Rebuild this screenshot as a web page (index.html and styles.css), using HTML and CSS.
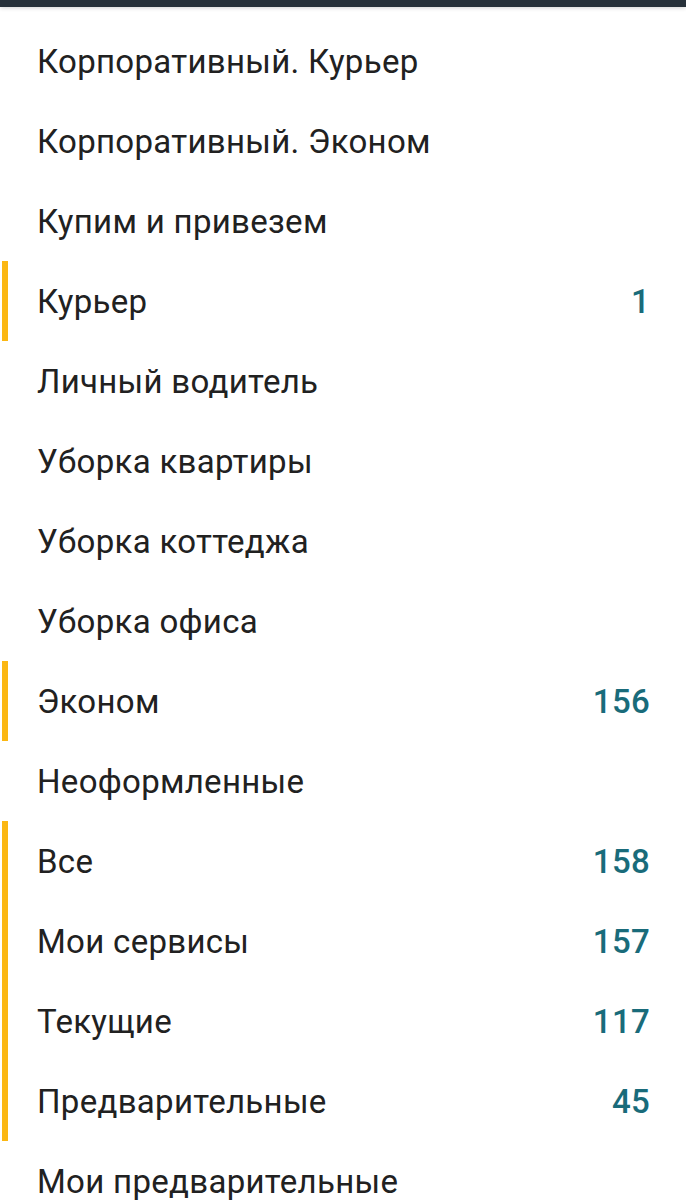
FILE: index.html
```html
<!DOCTYPE html>
<html lang="ru">
<head>
<meta charset="utf-8">
<title>Список</title>
<link rel="stylesheet" href="styles.css">
</head>
<body>
<div class="topbar"></div>
<ul class="list">
  <li class="row"><span class="label">Корпоративный. Курьер</span></li>
  <li class="row"><span class="label">Корпоративный. Эконом</span></li>
  <li class="row"><span class="label">Купим и привезем</span></li>
  <li class="row active"><span class="label">Курьер</span><span class="count">1</span></li>
  <li class="row"><span class="label">Личный водитель</span></li>
  <li class="row"><span class="label">Уборка квартиры</span></li>
  <li class="row"><span class="label">Уборка коттеджа</span></li>
  <li class="row"><span class="label">Уборка офиса</span></li>
  <li class="row active"><span class="label">Эконом</span><span class="count">156</span></li>
  <li class="row"><span class="label">Неоформленные</span></li>
  <li class="row active"><span class="label">Все</span><span class="count">158</span></li>
  <li class="row active"><span class="label">Мои сервисы</span><span class="count">157</span></li>
  <li class="row active"><span class="label">Текущие</span><span class="count">117</span></li>
  <li class="row active"><span class="label">Предварительные</span><span class="count">45</span></li>
  <li class="row"><span class="label">Мои предварительные</span></li>
</ul>
</body>
</html>
```
FILE: styles.css
```css
html, body {
  margin: 0;
  padding: 0;
  background: #ffffff;
}
body {
  font-family: Roboto, "Noto Sans", "Liberation Sans", sans-serif;
  overflow: hidden;
}
.topbar {
  height: 7px;
  background: #263039;
  box-shadow: 0 1px 4px rgba(0, 0, 0, 0.18);
}
.list {
  list-style: none;
  margin: 0;
  padding: 14px 0 0 2px;
}
.row {
  height: 80px;
  display: flex;
  align-items: center;
  justify-content: space-between;
  box-sizing: border-box;
  border-left: 6px solid transparent;
  padding: 0 36px 0 29px;
}
.row.active {
  border-left-color: #fbb713;
}
.label {
  font-size: 33px;
  letter-spacing: 0.3px;
  color: #212121;
  font-weight: 400;
}
.count {
  font-size: 33px;
  letter-spacing: 0.3px;
  color: #196b7a;
  font-weight: 500;
}
```
